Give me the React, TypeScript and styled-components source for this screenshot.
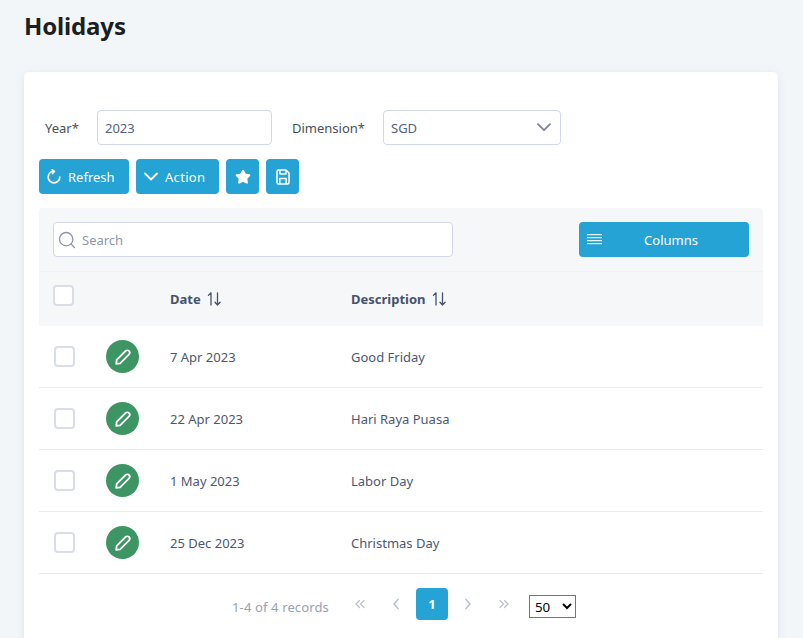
import React from "react";
import styled, { createGlobalStyle } from "styled-components";
import { Search, Star } from "lucide-react";

const Global = createGlobalStyle`
  html, body { margin: 0; padding: 0; height: 100%; overflow: hidden; background: #f3f6f9; }
  body { font-family: "Noto Sans", "Open Sans", sans-serif; font-size: 13px; color: #4b5563; }
  * { box-sizing: border-box; }
`;
const Page = styled.div`padding: 9px 25px 0 24px; height: 638px; overflow: hidden;`;
const Title = styled.h1`margin: 0 0 30px; font: 700 24px/33px "Noto Sans", sans-serif; color: #1b1e22; letter-spacing: -0.15px;`;
const Card = styled.main`background: #fff; border-radius: 5px; padding: 38px 15px 0; height: 600px; box-shadow: 0 2px 6px rgba(40, 60, 90, .06), 0 0 12px rgba(40, 60, 90, .04);`;
const FilterRow = styled.div`display: flex; align-items: center; height: 35px; padding-left: 6px;`;
const Label = styled.label`color: #495057; font-size: 13px; width: ${p => p.$width}px; flex: none;`;
const TextBox = styled.div`height: 35px; width: ${p => p.$width}px; flex: none; border: 1px solid #d3d8e4; border-radius: 4px; background: #fff; padding: 0 7px; display: flex; align-items: center; justify-content: space-between; color: #56627a; font-size: 13px;`;
const Gap = styled.div`width: ${p => p.$width}px; flex: none;`;
const Toolbar = styled.div`display: flex; gap: 7px; margin-top: 14px;`;
const Btn = styled.button`height: 35px; width: ${p => p.$width}px; padding: ${p => p.$pad ?? 0}; border: 0; border-radius: 4px; background: #25a3d5; color: #fff; display: flex; align-items: center; justify-content: ${p => p.$pad ? "flex-start" : "center"}; gap: ${p => p.$gap ?? 0}px; font: 400 13px "Noto Sans", sans-serif; letter-spacing: ${p => p.$track ?? 0}px;`;
const TablePanel = styled.section`margin-top: 14px; width: 724px; border-radius: 4px 4px 0 0;`;
const TableTop = styled.div`display: flex; justify-content: space-between; align-items: center; height: 64px; padding: 0 14px; background: #f6f7f9; border-bottom: 1px solid #f1f2f5; border-radius: 4px 4px 0 0;`;
const SearchBox = styled.div`width: 400px; height: 35px; border: 1px solid #d3d8e4; border-radius: 4px; background: #fff; display: flex; align-items: center; gap: 5px; padding: 0 3px; color: #8d96a9; font-size: 13px;`;
const ColumnsBtn = styled.button`width: 170px; height: 35px; border: 0; border-radius: 4px; background: #25a3d5; color: #fff; display: grid; grid-template-columns: 32px 1fr 18px; align-items: center; padding: 0; font: 400 13px "Noto Sans", sans-serif;`;
const Row = styled.div`display: grid; grid-template-columns: 131px 181px 1fr; height: ${p => p.$height}px; align-items: center; background: ${p => p.$head ? "#f6f7f9" : "#fff"}; border-bottom: ${p => p.$head ? "0" : "1px solid #e9ecef"}; color: #4d5870; font-size: 13px;`;
const Controls = styled.div`display: flex; align-items: center; padding-left: 15px;`;
const Check = styled.span`display: block; width: 21px; height: 21px; border: 2px solid #d8dde7; border-radius: 4px; background: #fff; flex: none; margin-top: ${p => p.$head ? "-7px" : "0"}; margin-left: ${p => p.$head ? "-1px" : "0"};`;
const Edit = styled.button`width: 33px; height: 33px; margin-left: 31px; border: 0; border-radius: 50%; background: #3c9562; color: #fff; display: flex; align-items: center; justify-content: center; padding: 0;`;
const HeadCell = styled.div`display: flex; align-items: center; gap: 6px; font-weight: 700; color: #47526b; font-size: 13px;`;
const Footer = styled.footer`display: flex; align-items: center; height: 66px; padding-left: 193px; color: #98a1b3; font-size: 13px;`;
const Records = styled.span`letter-spacing: .13px;`;
const Pager = styled.nav`display: flex; align-items: center; margin: -6px 0 0 13px; color: #bcc3cf;`;
const PageBtn = styled.span`width: 36px; height: 32px; display: flex; align-items: center; justify-content: center; flex: none;`;
const Current = styled.span`width: 32px; height: 32px; margin: 0 2px; border-radius: 4px; background: #25a3d5; color: #fff; font-weight: 700; font-size: 13px; display: flex; align-items: center; justify-content: center;`;
const PageSize = styled.select`width: 47px; height: 23px; margin: -1px 0 0 7px; border: 1px solid #767676; border-radius: 0; background: #fff; color: #000; font: 400 13.33px "Noto Sans", sans-serif; padding: 0 0 0 1px;`;

const Glyph = ({ w, h, d, sw = 1.6 }: { w: number; h: number; d: string; sw?: number }) => (
  <svg width={w} height={h} viewBox={`0 0 ${w} ${h}`} fill="none" stroke="currentColor" strokeWidth={sw} strokeLinecap="round" strokeLinejoin="round">
    <path d={d} />
  </svg>
);
const SortIcon = () => (
  <svg width="15" height="16" viewBox="0 0 15 16" fill="none" stroke="#47526b" strokeWidth="1.3" strokeLinecap="round" strokeLinejoin="round">
    <path d="M4 14V1.8L1.4 4.4M10.5 1.8V14M8 11.2l2.5 2.8 2.6-2.8" />
  </svg>
);
const BarsIcon = () => (
  <svg width="15" height="12" viewBox="0 0 15 12" fill="#e8f7fd" style={{ marginLeft: 8 }}>
    <rect y="0" width="15" height="1.2" /><rect y="3" width="15" height="1.2" /><rect y="6" width="15" height="1.2" /><rect y="9" width="15" height="1.2" />
  </svg>
);
const RefreshIcon = () => <Glyph w={14} h={15} sw={1.7} d="M7 2.2A5.8 5.8 0 1 0 12.8 8M5.2 0.6L7.4 2.3 5.6 4.6" />;
const SaveIcon = () => (
  <svg width="14" height="16" viewBox="0 0 14 16" fill="none" stroke="currentColor" strokeWidth="1.5" strokeLinejoin="round">
    <path d="M2.5 1H10l3 3v9.5a1.5 1.5 0 0 1-1.5 1.5h-9A1.5 1.5 0 0 1 1 13.5v-11A1.5 1.5 0 0 1 2.5 1Z" />
    <path d="M4 1v4h6V1M3.8 15V9.5h6.4V15" />
  </svg>
);
const PencilIcon = () => (
  <svg width="20" height="20" viewBox="0 0 20 20" fill="none" stroke="currentColor" strokeWidth="1.8" strokeLinecap="round" strokeLinejoin="round">
    <path d="M3.2 16.8l.5-3.9L12.6 4a2.4 2.4 0 0 1 3.4 3.4l-8.9 8.9-3.9.5Z" />
  </svg>
);

const rows = [
  ["7 Apr 2023", "Good Friday"],
  ["22 Apr 2023", "Hari Raya Puasa"],
  ["1 May 2023", "Labor Day"],
  ["25 Dec 2023", "Christmas Day"],
];

export default function App() {
  return (
    <Page>
      <Global />
      <Title>Holidays</Title>
      <Card>
        <FilterRow>
          <Label $width={52}>Year*</Label>
          <TextBox $width={175}>2023</TextBox>
          <Gap $width={20} />
          <Label $width={91}>Dimension*</Label>
          <TextBox $width={178}>SGD<span style={{ color: "#7b8499", display: "flex", marginRight: 2 }}><Glyph w={14} h={9} sw={1.8} d="M1 1.2l6 6 6-6" /></span></TextBox>
        </FilterRow>
        <Toolbar>
          <Btn $width={90} $pad="0 0 0 8px" $gap={7}><RefreshIcon />Refresh</Btn>
          <Btn $width={83} $pad="0 0 0 7px" $gap={6} $track={0.3}><Glyph w={16} h={10} sw={1.9} d="M2 1.5l6 6 6-6" />Action</Btn>
          <Btn $width={33}><Star size={16} fill="#fff" /></Btn>
          <Btn $width={33}><SaveIcon /></Btn>
        </Toolbar>
        <TablePanel>
          <TableTop>
            <SearchBox><Search size={20} strokeWidth={1.6} />Search</SearchBox>
            <ColumnsBtn><BarsIcon /><span>Columns</span><span /></ColumnsBtn>
          </TableTop>
          <Row $head $height={54}>
            <Controls><Check $head /></Controls>
            <HeadCell>Date <SortIcon /></HeadCell>
            <HeadCell>Description <SortIcon /></HeadCell>
          </Row>
          {rows.map(([date, description]) => (
            <Row key={date} $height={62}>
              <Controls><Check /><Edit><PencilIcon /></Edit></Controls>
              <div>{date}</div>
              <div>{description}</div>
            </Row>
          ))}
        </TablePanel>
        <Footer>
          <Records>1-4 of 4 records</Records>
          <Pager>
            <PageBtn><Glyph w={12} h={10} sw={1.4} d="M5.5 1.5L2 5l3.5 3.5M10 1.5L6.5 5 10 8.5" /></PageBtn>
            <PageBtn><Glyph w={8} h={12} sw={1.7} d="M6 1.5L2 6l4 4.5" /></PageBtn>
            <Current>1</Current>
            <PageBtn><Glyph w={8} h={12} sw={1.7} d="M2 1.5L6 6l-4 4.5" /></PageBtn>
            <PageBtn><Glyph w={12} h={10} sw={1.4} d="M2 1.5L5.5 5 2 8.5M6.5 1.5L10 5 6.5 8.5" /></PageBtn>
          </Pager>
          <PageSize defaultValue="50"><option>50</option></PageSize>
        </Footer>
      </Card>
    </Page>
  );
}
